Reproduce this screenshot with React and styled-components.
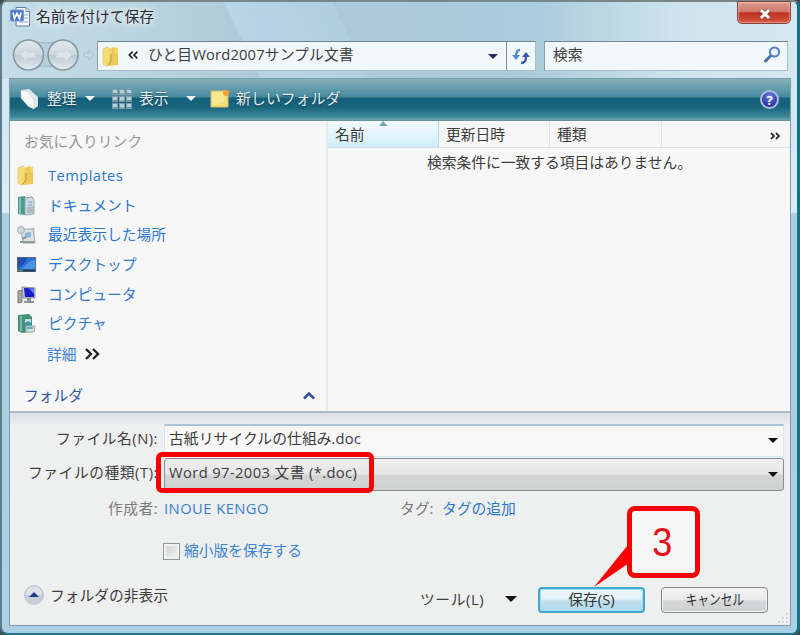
import React from 'react';
import styled, { createGlobalStyle } from 'styled-components';

const GlobalStyle = createGlobalStyle`
  * {
    box-sizing: border-box;
  }
  body {
    margin: 0;
    overflow: hidden;
    background: #3c4a50;
    font-family: 'Open Sans', 'Noto Sans CJK JP', sans-serif;
    font-size: 14.75px;
    line-height: 20px;
    color: #3c3c3c;
  }
`;

const Window = styled.div`
  position: relative;
  display: flex;
  flex-direction: column;
  width: 800px;
  height: 635px;
  padding: 0 7px 7px;
  border: 2px solid #5d7d8a;
  border-top-color: #77868b;
  border-right: 3px solid #147486;
  border-bottom-color: #1b7388;
  border-radius: 7px 7px 8px 8px;
  background:
    linear-gradient(64deg, transparent 31%, rgba(190, 220, 238, 0.6) 31.2%, rgba(180, 214, 230, 0.5) 44%, transparent 44.2%) 0 0 / 100% 76px no-repeat,
    linear-gradient(90deg, #c6dde8 0, #acc9d9 34%, #a9cbdb 66%, #cfe4ee 86%, #d5e8f1 100%) 0 0 / 100% 77px no-repeat,
    linear-gradient(180deg, #cfe4ee 0, #d9edf7 210px, #a9cee2 212px, #a9d0e4 100%);
`;

const Text = styled.span`
  white-space: nowrap;
  color: ${p => p.$color || 'inherit'};
  letter-spacing: ${p => p.$spacing || 0}px;
`;

const TitleBar = styled.div`
  display: flex;
  flex: none;
  height: 39px;
  padding: 4px 0 0 1px;
`;

const TitleText = styled(Text)`
  margin: 0 0 0 5px;
  color: #2b2b31;
  text-shadow: 0 0 8px #fff, 0 0 10px #fff;
`;

const CloseButton = styled.button`
  display: flex;
  align-items: center;
  justify-content: center;
  width: 54px;
  height: 23px;
  margin: -5px -1px 0 auto;
  padding: 2px 0 0 2px;
  border: 1px solid #81433d;
  border-radius: 0 0 5px 5px;
  background: linear-gradient(#dda095 0, #cf7768 46%, #bd2e20 52%, #d75b43 100%);
  box-shadow: inset 0 0 1px 1px rgba(255, 210, 200, 0.5);
`;

const AddressRow = styled.div`
  display: flex;
  flex: none;
  height: 37px;
  padding-right: 2px;
`;

const NavButtons = styled.div`
  width: 88px;
  margin-top: -3px;
`;

const Field = styled.div`
  display: flex;
  align-items: center;
  width: ${p => p.$width}px;
  height: 30px;
  border: 1px solid #a8bec9;
  border-top-color: #70858e;
  border-left-color: #8b9ca4;
  background: #f1f7fa;
`;

const AddressField = styled(Field)`
  padding-left: 4px;
`;

const AddressText = styled(Text)`
  padding-bottom: 4px;
`;

const PathMark = styled.span`
  display: flex;
  width: 28px;
  padding: 0 0 3px 8px;
`;

const SearchField = styled(Field)`
  justify-content: space-between;
  margin-left: 8px;
  padding: 0 6px 4px 8px;
`;

const Refresh = styled.div`
  display: flex;
  align-items: center;
  justify-content: center;
  width: 29px;
  height: 28px;
  margin-left: 8px;
  border-left: 1px solid #83939c;
`;

const Arrow = styled.i`
  width: 0;
  height: 0;
  border: ${p => p.$size || 5}px solid transparent;
  border-bottom: 0;
  border-top-color: ${p => p.$color || '#111'};
`;

const PathArrow = styled(Arrow)`
  margin-left: auto;
`;

const Panel = styled.div`
  display: flex;
  flex: 1;
  flex-direction: column;
  min-height: 0;
  width: 782px;
  border: 1px solid #7e9ba8;
  background: #f7f7f7;
`;

const Toolbar = styled.div`
  display: flex;
  flex: none;
  align-items: center;
  height: 42px;
  padding: 0 11px 2px 10px;
  color: #e4eef2;
  border-bottom: 1px solid #69909c;
  background: linear-gradient(#84b1bb 0, #4b8ca0 17px, #47889b 18px, #15607b 19px, #18657d 28px, #3f8998 38px, #6ba5ad 41px);
`;

const ToolItem = styled.div`
  display: flex;
  align-items: center;
  width: ${p => p.$width}px;
  text-shadow: 0 1px 2px #123f52;

  svg {
    flex: none;
    margin-right: ${p => p.$gap}px;
  }
  span {
    padding-bottom: 2px;
  }
  i {
    margin-left: ${p => p.$arrowGap || 0}px;
  }
`;

const Help = styled.div`
  display: flex;
  align-items: center;
  justify-content: center;
  width: 19px;
  height: 19px;
  margin: 2px 0 0 auto;
  border: 2px solid #aebddb;
  border-radius: 50%;
  background: radial-gradient(circle at 50% 30%, #6f84dc, #2332a4 75%);
  color: #fff;
  font-size: 13px;
  font-weight: 700;
`;

const Content = styled.div`
  display: flex;
  flex: none;
  height: 290px;
`;

const Sidebar = styled.div`
  display: flex;
  flex-direction: column;
  width: 318px;
  padding: 10px 11px 6px 14px;
  border-right: 2px solid #e0edf0;
`;

const LinkList = styled.ul`
  margin: 10px 0 0 -7px;
  padding: 0;
  list-style: none;
`;

const LinkItem = styled.li`
  display: flex;
  align-items: center;
  height: 29.7px;
  color: #2d78d0;

  span {
    padding-bottom: 2px;
  }
`;

const LinkIcon = styled.div`
  display: flex;
  width: 31px;
`;

const More = styled.div`
  display: flex;
  align-items: center;
  gap: 8px;
  height: 29px;
  padding-left: 23px;
  color: #3c83d4;
`;

const FolderBar = styled.div`
  display: flex;
  align-items: center;
  justify-content: space-between;
  margin-top: auto;
  color: #33559d;
`;

const FileList = styled.div`
  flex: 1;
`;

const Header = styled.div`
  display: flex;
  height: 27px;
  border-bottom: 1px solid #dcdfe6;
`;

const Column = styled.div`
  position: relative;
  width: ${p => p.$width}px;
  padding: 3px 0 0 7px;
  border-right: 1px solid ${p => (p.$active ? '#a6dcef' : '#e0e3e8')};
  background: ${p => (p.$active ? 'linear-gradient(#f1fafd 0, #e6f6fc 45%, #d0edf8 100%)' : 'none')};

  svg {
    position: absolute;
    top: 0;
    left: 51px;
  }
`;

const Overflow = styled.div`
  margin: 3px 9px 0 auto;
`;

const Empty = styled.div`
  padding: 4px 0 0 99px;
`;

const Form = styled.div`
  display: flex;
  flex: 1;
  flex-direction: column;
  padding: 10px 6px 0 0;
  border-top: 2px solid #a9bac6;
  background: linear-gradient(#dbe1e6 0, #e9ecee 10px, #eeefef 13px, #eeefef 100%);
`;

const FormRow = styled.div`
  display: flex;
  align-items: center;
  flex: none;
  height: ${p => p.$height}px;
  padding-bottom: ${p => p.$lift || 0}px;
`;

const FormLabel = styled.label`
  width: 154px;
  padding: 0 6px ${p => p.$lift || 0}px 0;
  text-align: right;
  white-space: nowrap;
  letter-spacing: ${p => p.$spacing || 0}px;
  color: ${p => p.$color || '#3f3f3f'};
`;

const Author = styled(Text)`
  width: 236px;
`;

const TagLabel = styled(Text)`
  width: 42px;
`;

const Combo = styled.div`
  display: flex;
  align-items: center;
  justify-content: space-between;
  flex: 1;
  height: 33px;
  padding: 0 5px 0 4px;
  border: 1px solid #d5e7ef;
  border-top: 2px solid #aac5d7;
  background: #f8f8f8;

  span {
    padding-bottom: 6px;
  }
`;

const Select = styled(Combo)`
  border: 1px solid #8a8c8e;
  border-radius: 3px;
  background: linear-gradient(#eeeeee 0, #e7e7e7 48%, #d4d5d5 53%, #cfd0d0 100%);

  span {
    padding-bottom: 4px;
  }
`;

const Checkbox = styled.span`
  width: 17px;
  height: 17px;
  margin: 3px 4px 0 153px;
  border: 1px solid #929698;
  background: linear-gradient(135deg, #cfd2d6, #f4f4f4);
  box-shadow: inset 0 0 0 2px #f1f1f1;
`;

const Footer = styled.div`
  display: flex;
  align-items: flex-start;
  margin-top: 14px;
  padding-left: 14px;
`;

const HideFolders = styled.div`
  display: flex;
  align-items: center;
  gap: 6px;
  width: 396px;
  margin-top: -2px;
`;

const Tools = styled.div`
  display: flex;
  align-items: center;
  gap: 21px;
  width: 118px;
  margin-top: 2px;
`;

const Button = styled.button`
  width: 107px;
  height: 26px;
  margin: 0 16px 0 0;
  padding: 0 0 3px;
  border: ${p => (p.$primary ? '2px solid #4aa3c8' : '1px solid #85888a')};
  border-radius: 4px;
  background: ${p =>
    p.$primary
      ? 'linear-gradient(#eef7fb 0, #e2f1f8 45%, #bfdfed 55%, #b2dbee 100%)'
      : 'linear-gradient(#f2f2f2 0, #e9e9e9 48%, #d5d6d7 54%, #d0d1d2 100%)'};
  box-shadow: inset 0 0 0 1px ${p => (p.$primary ? '#94e3f8' : '#f4f4f4')};
  color: #333;
  font: inherit;
  line-height: 18px;
`;

const Condensed = styled.span`
  display: inline-block;
  transform: scaleX(0.79);
`;

const Grip = styled.svg`
  position: absolute;
  right: 8px;
  bottom: 9px;
`;

const Highlight = styled.div`
  position: absolute;
  left: 154px;
  top: 450px;
  width: 218px;
  height: 41px;
  border: 5px solid #fb0000;
  border-radius: 6px;
`;

const Callout = styled.div`
  position: absolute;
  left: 625px;
  top: 504px;
  display: flex;
  align-items: center;
  justify-content: center;
  width: 73px;
  height: 72px;
  padding-right: 2px;
  border: 5px solid #fb0000;
  border-radius: 8px;
  background: #f7f7f7;
  color: #e80c14;
  font-family: 'Liberation Sans', sans-serif;
  font-size: 41px;
  line-height: 50px;

  svg {
    position: absolute;
    left: -39px;
    top: 27px;
  }
`;

const CalloutNumber = styled.span`
  transform: scaleX(0.88);
`;

const WordIcon = () => (
  <svg width="21" height="21" viewBox="0 0 21 21">
    <path d="M6 1.5h10l3.5 3.5v15h-13.500z" fill="#f5f8fd" stroke="#5f7ba9" />
    <path d="M16 1.500v4h3.500" fill="#cbd8ee" stroke="#7f97bf" />
    <path d="M14 9h4M14 12h4M9 16h9" stroke="#8ba6d4" />
    <rect x=".5" y="4" width="13" height="11" rx="1" fill="#4a74cf" stroke="#7898dc" />
    <path d="M3 6.500l1.500 6 2.500-5 2.500 5 1.500-6" fill="none" stroke="#fff" strokeWidth="1.700" />
  </svg>
);

const NavIcon = () => (
  <svg width="88" height="34" viewBox="0 0 88 34">
    <defs>
      <linearGradient id="nav" x2="0" y2="1">
        <stop offset="0" stopColor="#dfe8ed" />
        <stop offset=".48" stopColor="#cdd8df" />
        <stop offset=".52" stopColor="#bccad2" />
        <stop offset="1" stopColor="#e2edf2" />
      </linearGradient>
    </defs>
    <path d="M19 2q17 6 35 0v29q-18-6-35 0z" fill="#b9cfdb" stroke="#9db6c3" />
    <circle cx="19.500" cy="17" r="15" fill="url(#nav)" stroke="#8497a2" strokeWidth="1.500" />
    <circle cx="54" cy="17" r="15" fill="url(#nav)" stroke="#8497a2" strokeWidth="1.500" />
    <path d="M11 17l7-7v4h9v6h-9v4zM63 17l-7-7v4h-9v6h9v4z" fill="#dbe4e8" stroke="#c8d3da" />
    <path d="M75 15h5v-3l5 5-5 5v-3h-5z" fill="#c6dae4" stroke="#a6bdc9" />
  </svg>
);

const FolderIcon = () => (
  <svg width="18" height="21" viewBox="0 0 18 21">
    <path d="M1 3l5-2 2 2v16l-4 1-3-2z" fill="#f6dc76" stroke="#e0c164" strokeWidth=".7" />
    <path d="M8 3l3-2 5 1v17H5z" fill="#f4d567" />
    <path d="M8 3l2 2v10l-4 5 10-1V8l-3-1V2" fill="#ecc85a" />
    <path d="M9 8v7l-3 4" stroke="#b78d2c" fill="none" />
  </svg>
);

const RefreshIcon = () => (
  <svg width="18" height="18" viewBox="0 0 18 18" fill="none" strokeWidth="2.300">
    <path d="M8 3Q4 3 4 10" stroke="#4b8fce" />
    <path d="M0 8h8l-4 5z" fill="#4b8fce" />
    <path d="M9 16q5 0 5-6" stroke="#3459ad" />
    <path d="M10 10h8l-4-5z" fill="#3459ad" />
  </svg>
);

const SearchIcon = () => (
  <svg width="17" height="17" viewBox="0 0 17 17" fill="none">
    <path d="M7 9.500L1.500 15" stroke="#4a6da9" strokeWidth="3" strokeLinecap="round" />
    <circle cx="10.500" cy="6" r="4.600" fill="#e9f3fb" stroke="#4c7fc4" strokeWidth="2" />
  </svg>
);

const OrganizeIcon = () => (
  <svg width="20" height="22" viewBox="0 0 20 22">
    <path d="M1 2l8-1 9 8v9l-4 3-5-2-8-9z" fill="#dfe7ec" />
    <path d="M1 2l7 2 6 8v9l-6-3-7-8z" fill="#f6f8fa" stroke="#b6c7d1" strokeWidth=".5" />
  </svg>
);

const ViewsIcon = () => (
  <svg width="20" height="20" viewBox="0 0 20 20">
    {[0, 7, 14].map(y =>
      [0, 7, 14].map(x => (
        <g key={`${x}-${y}`}>
          <rect x={x + 0.5} y={y + 0.5} width="5" height="5" fill="#b5d0db" stroke="#7f9cac" />
          <path d={`M${x + 1} ${y + 4.5}h4`} stroke={x === 7 ? '#a7b57a' : '#5e92b6'} />
        </g>
      ))
    )}
  </svg>
);

const NewFolderIcon = () => (
  <svg width="20" height="20" viewBox="0 0 20 20">
    <path d="M1 2h15l2 3v13H1z" fill="#f5dc78" stroke="#dec064" />
    <path d="M2 3h12v10L2 17z" fill="#f9e792" />
    <circle cx="16" cy="4" r="3" fill="#f4a334" />
  </svg>
);

const DocumentsIcon = () => (
  <svg width="19" height="20" viewBox="0 0 19 20">
    <path d="M1 1l7-1v19l-7-1z" fill="#4c9b8b" />
    <path d="M8 2l7-1 2 3v14l-9 1z" fill="#cbdce3" stroke="#8fa4ad" />
    <path d="M3 2v16" stroke="#98cabd" strokeWidth="1.500" />
    <path d="M11 6h4M11 9h4" stroke="#6b9ccc" />
    <path d="M10 11h6v6h-6z" fill="#aeb8bd" />
  </svg>
);

const RecentIcon = () => (
  <svg width="19" height="20" viewBox="0 0 19 20">
    <path d="M4 4h12l2 14H6z" fill="#d9e2e5" stroke="#9aa5a9" />
    <path d="M8 8l6-1v5l-6 1z" fill="#86bad6" />
    <path d="M12 5l5-2v8" fill="none" stroke="#b1bfc4" />
    <circle cx="4" cy="5" r="3.500" fill="#d0d8da" stroke="#a6afb2" />
    <path d="M3 17h14M5 14l4-2" stroke="#8c999e" strokeWidth="2" />
  </svg>
);

const DesktopIcon = () => (
  <svg width="19" height="16" viewBox="0 0 19 16">
    <rect x=".5" y=".5" width="18" height="14" fill="#2f6fd3" stroke="#526984" />
    <path d="M1 1h9Q8 8 1 11z" fill="#2450ae" />
    <path d="M8 9q4-6 10-6v9H5z" fill="#4a91e5" />
    <path d="M1 13.500h17" stroke="#283c53" strokeWidth="2" />
    <path d="M1 13.500h5" stroke="#4e9168" strokeWidth="2" />
  </svg>
);

const ComputerIcon = () => (
  <svg width="19" height="18" viewBox="0 0 19 18">
    <path d="M1 5l4-1v12l-4 1z" fill="#aaa8a3" stroke="#787672" />
    <path d="M5 1l13 1v10H6z" fill="#c5c8d7" stroke="#8b8da0" />
    <path d="M7 2l10 .5V11H8z" fill="#191cc4" />
    <path d="M12 2.500l5 .5v5z" fill="#5b83ef" />
    <path d="M10 12h4v3h3v2H7v-2h3z" fill="#92939a" />
  </svg>
);

const PicturesIcon = () => (
  <svg width="19" height="20" viewBox="0 0 19 20">
    <path d="M1 1l11-1 3 3v15l-10 1-4-2z" fill="#459079" />
    <path d="M4 2v15" stroke="#81bba7" strokeWidth="2" />
    <path d="M8 5h6v6H8z" fill="#bde3ed" />
    <path d="M8 9l3-2 3 2v2H8z" fill="#3f91ae" />
    <path d="M9 12h9l-1 6H9z" fill="#d4dcda" stroke="#a0b3ad" />
    <path d="M10 14h6" stroke="#5fa9c8" strokeWidth="2" />
  </svg>
);

const Chevrons = ({ size = 14, left }) => (
  <svg width={size} height={size * 0.8} viewBox="0 0 15 12" fill="none" stroke="#222" strokeWidth="2.400">
    <path d={left ? 'M7 1L2 6l5 5M14 1L9 6l5 5' : 'M1 1l5 5-5 5M8 1l5 5-5 5'} />
  </svg>
);

const links = [
  { name: 'Templates', Icon: FolderIcon, spacing: 0.4 },
  { name: 'ドキュメント', Icon: DocumentsIcon },
  { name: '最近表示した場所', Icon: RecentIcon },
  { name: 'デスクトップ', Icon: DesktopIcon },
  { name: 'コンピュータ', Icon: ComputerIcon },
  { name: 'ピクチャ', Icon: PicturesIcon },
];

const App = () => {
  return (
    <>
      <GlobalStyle />
      <Window>
        <TitleBar>
          <WordIcon />
          <TitleText>名前を付けて保存</TitleText>
          <CloseButton>
            <svg width="14" height="12" viewBox="0 0 14 12">
              <path d="M3 2l8 8M11 2l-8 8" stroke="#75433d" strokeWidth="4.500" />
              <path d="M3 2l8 8M11 2l-8 8" stroke="#fff" strokeWidth="3" />
            </svg>
          </CloseButton>
        </TitleBar>

        <AddressRow>
          <NavButtons>
            <NavIcon />
          </NavButtons>
          <AddressField $width={439}>
            <FolderIcon />
            <PathMark>
              <Chevrons size={10} left />
            </PathMark>
            <AddressText $spacing={0.15}>ひと目Word2007サンプル文書</AddressText>
            <PathArrow $color="#2d2754" />
            <Refresh>
              <RefreshIcon />
            </Refresh>
          </AddressField>
          <SearchField $width={244}>
            <Text>検索</Text>
            <SearchIcon />
          </SearchField>
        </AddressRow>

        <Panel>
          <Toolbar>
            <ToolItem $width={92} $gap={7} $arrowGap={8}>
              <OrganizeIcon />
              <Text>整理</Text>
              <Arrow $color="#eef5f7" />
            </ToolItem>
            <ToolItem $width={98} $gap={7} $arrowGap={17}>
              <ViewsIcon />
              <Text>表示</Text>
              <Arrow $color="#eef5f7" />
            </ToolItem>
            <ToolItem $gap={6} $width={140}>
              <NewFolderIcon />
              <Text $spacing={0.2}>新しいフォルダ</Text>
            </ToolItem>
            <Help>?</Help>
          </Toolbar>

          <Content>
            <Sidebar>
              <Text $color="#969696">お気に入りリンク</Text>
              <LinkList>
                {links.map(({ name, Icon, spacing }) => (
                  <LinkItem key={name}>
                    <LinkIcon>
                      <Icon />
                    </LinkIcon>
                    <Text $spacing={spacing}>{name}</Text>
                  </LinkItem>
                ))}
              </LinkList>
              <More>
                詳細
                <Chevrons size={15} />
              </More>
              <FolderBar>
                フォルダ
                <svg width="12" height="9" viewBox="0 0 12 9" fill="none">
                  <path d="M1 7.500l5-5 5 5" stroke="#354f9f" strokeWidth="2.600" />
                </svg>
              </FolderBar>
            </Sidebar>
            <FileList>
              <Header>
                <Column $width={111} $active>
                  名前
                  <svg width="9" height="5" viewBox="0 0 9 5">
                    <path d="M0 5l4-5 5 5z" fill="#70a8b8" />
                  </svg>
                </Column>
                <Column $width={111}>更新日時</Column>
                <Column $width={112}>種類</Column>
                <Overflow>
                  <svg width="11" height="8" viewBox="0 0 11 8" fill="none" stroke="#333" strokeWidth="1.800">
                    <path d="M1 1l3 3-3 3M6 1l3 3-3 3" />
                  </svg>
                </Overflow>
              </Header>
              <Empty>検索条件に一致する項目はありません。</Empty>
            </FileList>
          </Content>

          <Form>
            <FormRow $height={34}>
              <FormLabel $spacing={0.5} $lift={5}>ファイル名(N):</FormLabel>
              <Combo>
                <Text $spacing={0.1}>古紙リサイクルの仕組み.doc</Text>
                <Arrow />
              </Combo>
            </FormRow>
            <FormRow $height={34}>
              <FormLabel $spacing={0.55} $lift={4}>ファイルの種類(T):</FormLabel>
              <Select>
                <Text $spacing={0.38}>Word 97-2003 文書 (*.doc)</Text>
                <Arrow />
              </Select>
            </FormRow>
            <FormRow $height={36} $lift={3}>
              <FormLabel $spacing={0.5} $color="#7b7b7b">作成者:</FormLabel>
              <Author $color="#3c80cf" $spacing={0.45}>INOUE KENGO</Author>
              <TagLabel $color="#777">タグ:</TagLabel>
              <Text $color="#2d78d0">タグの追加</Text>
            </FormRow>
            <FormRow $height={46} $lift={1}>
              <Checkbox />
              <Text $color="#3c83d4">縮小版を保存する</Text>
            </FormRow>
            <Footer>
              <HideFolders>
                <svg width="20" height="20" viewBox="0 0 20 20">
                  <circle cx="10" cy="10" r="9.300" fill="#dde1e8" stroke="#b0b5bf" />
                  <path d="M1 10a9 9 0 0018 0z" fill="#c7ccd6" />
                  <path d="M5 12l5-5 5 5z" fill="#223e86" />
                </svg>
                フォルダの非表示
              </HideFolders>
              <Tools>
                <Text $spacing={0.6}>ツール(L)</Text>
                <Arrow $size={6} />
              </Tools>
              <Button $primary>保存(S)</Button>
              <Button>
                <Condensed>キャンセル</Condensed>
              </Button>
            </Footer>
          </Form>
        </Panel>

        <Grip width="12" height="12" viewBox="0 0 12 12">
          <path d="M9 1h2v2H9zM9 5h2v2H9zM9 9h2v2H9zM5 5h2v2H5zM5 9h2v2H5zM1 9h2v2H1z" fill="#d3d7d9" />
        </Grip>
        <Highlight />
        <Callout>
          <CalloutNumber>3</CalloutNumber>
          <svg width="40" height="52" viewBox="0 0 40 52">
            <path d="M39 2v21L1 49z" fill="#fb0000" />
          </svg>
        </Callout>
      </Window>
    </>
  );
};

export default App;
